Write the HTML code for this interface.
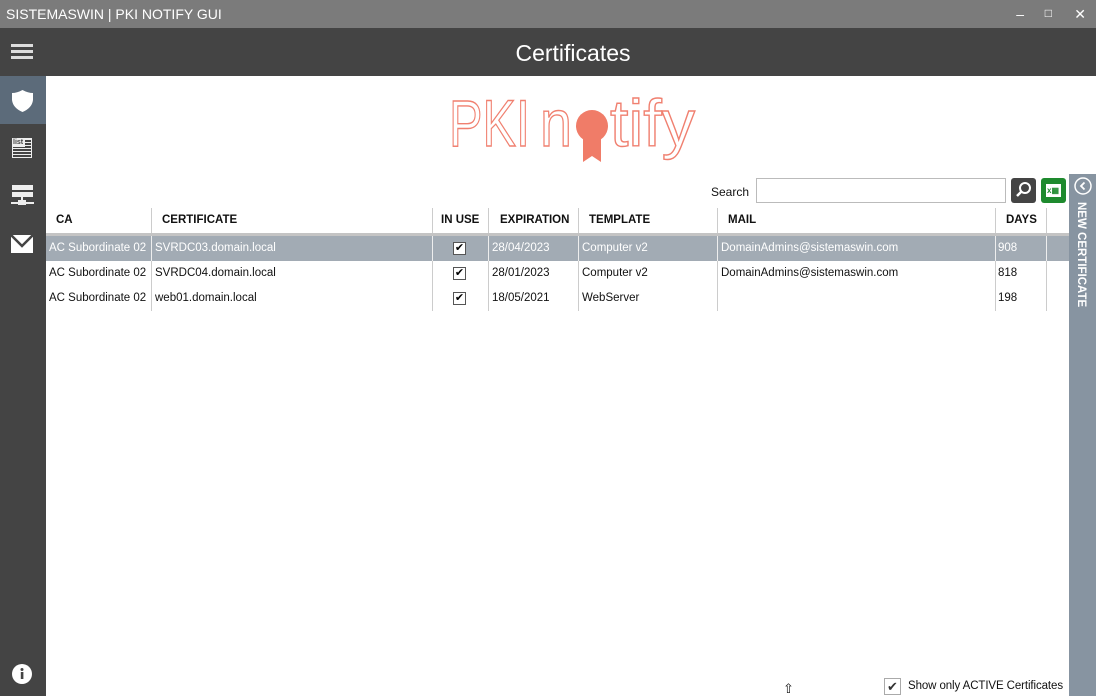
<!DOCTYPE html>
<html><head><meta charset="utf-8"><style>
*{margin:0;padding:0;box-sizing:border-box}
body{width:1096px;height:696px;overflow:hidden;background:#fff;font-family:"Liberation Sans",sans-serif;position:relative;font-size:12px;color:#111}
.a{position:absolute}
.tb{left:0;top:0;width:1096px;height:28px;background:#7b7b7b;color:#fff;font-size:14px;line-height:28px;padding-left:6px}
.hd{left:0;top:28px;width:1096px;height:48px;background:#444;color:#fff;font-size:23px;text-align:center;line-height:50px;padding-left:50px}
.sb{left:0;top:76px;width:46px;height:620px;background:#444}
.col{position:absolute;top:0;height:100%;width:1px;background:#ccc}
.th{position:absolute;top:214px;font-weight:bold;font-size:11.5px}
.r{position:absolute;left:46px;width:1023px;height:25px;line-height:25px}
.r span{position:absolute;font-size:11.5px}
.cb{position:absolute;width:13px;height:13px;border:1px solid #555;background:#fff;font-size:11px;line-height:11px;text-align:center;top:6px;color:#000}
</style></head><body>
<div class="a tb">SISTEMASWIN | PKI NOTIFY GUI
<span style="position:absolute;right:72px;top:0">–</span><span style="position:absolute;right:44px;top:-1px;font-size:12px">□</span><span style="position:absolute;right:10px;top:0">✕</span></div>
<div class="a hd">Certificates</div>
<div class="a" style="left:11px;top:44px;width:22px;height:3px;background:#ddd;box-shadow:0 6px 0 #ddd,0 12px 0 #ddd"></div>
<div class="a sb"></div>
<div class="a" style="left:0;top:76px;width:46px;height:48px;background:#5c6b7a"></div>
<svg class="a" style="left:11px;top:89px" width="23" height="24" viewBox="0 0 23 24"><path d="M11.5 1 Q6 4 1 4 L1 11 Q2 19 11.5 23 Q21 19 22 11 L22 4 Q17 4 11.5 1Z" fill="#fff"/></svg>
<div class="a" style="left:12px;top:138px;width:20px;height:20px;border:1px solid #eee;background:repeating-linear-gradient(#eee 0 1px,#444 1px 3px)"><div style="background:#eee;color:#444;font-size:7px;font-weight:bold;width:12px;height:8px;line-height:8px">list</div></div>
<div class="a" style="left:12px;top:185px;width:21px;height:5px;background:#eee"></div>
<div class="a" style="left:12px;top:192px;width:21px;height:5px;background:#eee"></div>
<div class="a" style="left:21px;top:197px;width:2px;height:5px;background:#eee"></div>
<div class="a" style="left:11px;top:202px;width:23px;height:2px;background:#eee"></div>
<div class="a" style="left:18px;top:200px;width:8px;height:5px;background:#eee"></div>
<svg class="a" style="left:11px;top:235px" width="22" height="18"><rect width="22" height="18" fill="#fff"/><path d="M0 0 L11 11 L22 0" stroke="#444" stroke-width="2.5" fill="none"/></svg>
<svg class="a" style="left:12px;top:664px" width="20" height="20"><circle cx="10" cy="10" r="10" fill="#fff"/><rect x="8.8" y="8" width="2.6" height="7" fill="#444"/><circle cx="10" cy="5.5" r="1.5" fill="#444"/></svg>
<svg class="a" style="left:0;top:76px" width="1000" height="100">
<g font-family="Liberation Sans" font-size="66" fill="none" stroke="#f08070" stroke-width="1.4">
<text x="449" y="70" textLength="81" lengthAdjust="spacingAndGlyphs">PKI</text>
<text x="540" y="70" textLength="32" lengthAdjust="spacingAndGlyphs">n</text>
<text x="610" y="70" textLength="85" lengthAdjust="spacingAndGlyphs">tify</text>
</g>
<circle cx="592" cy="50" r="16" fill="#f07c68"/>
<path d="M583 62 L601 62 L601 86 L592 80 L583 86Z" fill="#f07c68"/>
</svg>
<div class="a" style="left:711px;top:185px;font-size:12px">Search</div>
<div class="a" style="left:756px;top:178px;width:250px;height:25px;border:1px solid #bbb"></div>
<div class="a" style="left:1011px;top:178px;width:25px;height:25px;background:#444;border-radius:3px"><svg width="25" height="25"><circle cx="14" cy="10" r="5" stroke="#fff" stroke-width="2" fill="none"/><path d="M10.5 13.5 L6 18" stroke="#fff" stroke-width="2.5"/></svg></div>
<div class="a" style="left:1041px;top:178px;width:25px;height:25px;background:#1e8a2e;border-radius:3px"><div style="margin:6px 5px;width:15px;height:13px;background:#fff;font-size:8px;color:#1e8a2e;line-height:13px;font-weight:bold;padding-left:1px">x▦</div></div>
<div class="a" style="left:1069px;top:174px;width:27px;height:522px;background:#8794a1"></div>
<svg class="a" style="left:1074px;top:177px" width="18" height="18"><circle cx="9" cy="9" r="8" stroke="#fff" stroke-width="1.5" fill="none"/><path d="M10.5 5.5 L7 9 L10.5 12.5" stroke="#fff" stroke-width="1.8" fill="none"/></svg>
<div class="a" style="left:1075px;top:202px;color:#fff;font-weight:bold;font-size:11.5px;writing-mode:vertical-rl">NEW CERTIFICATE</div>
<div class="a" style="left:46px;top:208px;width:1023px;height:103px">
<div class="col" style="left:105px"></div><div class="col" style="left:386px"></div><div class="col" style="left:442px"></div><div class="col" style="left:532px"></div><div class="col" style="left:671px"></div><div class="col" style="left:949px"></div><div class="col" style="left:1000px"></div>
</div>
<div class="th" style="left:56px">CA</div><div class="th" style="left:162px">CERTIFICATE</div><div class="th" style="left:441px">IN USE</div><div class="th" style="left:500px">EXPIRATION</div><div class="th" style="left:589px">TEMPLATE</div><div class="th" style="left:728px">MAIL</div><div class="th" style="left:1006px">DAYS</div>
<div class="a" style="left:46px;top:233px;width:1023px;height:3px;background:#c4c4c4"></div>
<div class="r" style="top:236px;background:#a2abb4;color:#fff"><div class="col" style="left:105px;background:#eee"></div><div class="col" style="left:386px;background:#eee"></div><div class="col" style="left:442px;background:#eee"></div><div class="col" style="left:532px;background:#eee"></div><div class="col" style="left:671px;background:#eee"></div><div class="col" style="left:949px;background:#eee"></div><div class="col" style="left:1000px;background:#eee"></div>
<span style="left:3px">AC Subordinate 02</span><span style="left:109px">SVRDC03.domain.local</span><div class="cb" style="left:407px">✔</div><span style="left:446px">28/04/2023</span><span style="left:536px">Computer v2</span><span style="left:675px">DomainAdmins@sistemaswin.com</span><span style="left:952px">908</span></div>
<div class="r" style="top:261px"><span style="left:3px">AC Subordinate 02</span><span style="left:109px">SVRDC04.domain.local</span><div class="cb" style="left:407px">✔</div><span style="left:446px">28/01/2023</span><span style="left:536px">Computer v2</span><span style="left:675px">DomainAdmins@sistemaswin.com</span><span style="left:952px">818</span></div>
<div class="r" style="top:286px"><span style="left:3px">AC Subordinate 02</span><span style="left:109px">web01.domain.local</span><div class="cb" style="left:407px">✔</div><span style="left:446px">18/05/2021</span><span style="left:536px">WebServer</span><span style="left:952px">198</span></div>
<div class="a" style="left:783px;top:681px;font-size:13px">⇧</div>
<div class="a" style="left:884px;top:678px;width:17px;height:17px;border:1px solid #aaa;text-align:center;line-height:15px;font-size:13px;color:#333">✔</div>
<div class="a" style="left:908px;top:680px;font-size:11.5px;letter-spacing:-0.1px">Show only ACTIVE Certificates</div>
</body></html>
